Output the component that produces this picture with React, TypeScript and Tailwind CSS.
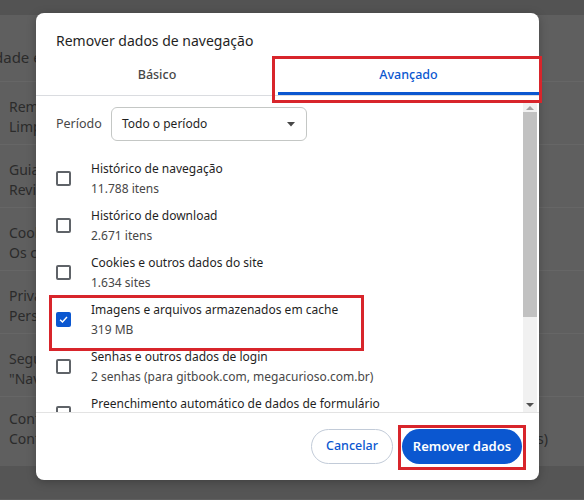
import React from "react";

const font = { fontFamily: '"Noto Sans", "Open Sans", Arial, sans-serif' };

const fundo = [
  {
    titulo: "Remover dados de navegação",
    sub: "Limpar histórico, cookies, cache e mais",
  },
  {
    titulo: "Guia de privacidade",
    sub: "Revise os principais controles de privacidade e segurança",
  },
  {
    titulo: "Cookies de terceiros",
    sub: "Os cookies de terceiros estão bloqueados no modo de navegação anônima",
  },
  {
    titulo: "Privacidade de anúncios",
    sub: "Personalize as informações usadas pelos sites para mostrar anúncios",
  },
  {
    titulo: "Segurança",
    sub: '"Navegação segura" (proteção contra sites perigosos) e outras configurações',
  },
];

const itens = [
  { nome: "Histórico de navegação", info: "11.788 itens", marcado: false },
  { nome: "Histórico de download", info: "2.671 itens", marcado: false },
  { nome: "Cookies e outros dados do site", info: "1.634 sites", marcado: false },
  {
    nome: "Imagens e arquivos armazenados em cache",
    info: "319 MB",
    marcado: true,
  },
  {
    nome: "Senhas e outros dados de login",
    info: "2 senhas (para gitbook.com, megacurioso.com.br)",
    marcado: false,
  },
  {
    nome: "Preenchimento automático de dados de formulário",
    info: "",
    marcado: false,
  },
];

function Caixa({ marcado }: { marcado: boolean }) {
  if (marcado) {
    return (
      <div className="w-[15px] h-[15px] rounded-[2px] bg-[#0b57d0] flex items-center justify-center shrink-0">
        <svg width="11" height="11" viewBox="0 0 12 12">
          <path
            d="M2.3 6.2 L4.9 8.7 L9.8 3.4"
            fill="none"
            stroke="white"
            strokeWidth="1.6"
          />
        </svg>
      </div>
    );
  }
  return (
    <div className="w-[15px] h-[15px] rounded-[2px] border-2 border-[#5f6368] shrink-0"></div>
  );
}

export default function App() {
  return (
    <div
      className="relative w-[584px] h-[500px] overflow-hidden bg-[#5f5f5f]"
      style={font}
    >
      {/* pagina de configuracoes escurecida */}
      <div className="h-[15px] bg-[#535353]"></div>
      <div className="h-[67px] flex items-end pb-[14px] border-b border-[#666666]">
        <div className="ml-[-6px] text-[15px] leading-[20px] text-[#2b2b2b] whitespace-nowrap">
          dade e segurança
        </div>
      </div>
      {fundo.map((r) => (
        <div
          key={r.titulo}
          className="h-[63px] pt-[15px] pl-[9px] border-b border-[#666666] text-[14px] leading-[20px] text-[#2b2b2b] whitespace-nowrap"
        >
          <div>{r.titulo}</div>
          <div>{r.sub}</div>
        </div>
      ))}
      <div className="h-[69px] pt-[12px] pl-[9px] text-[14px] leading-[20px] text-[#2b2b2b] whitespace-nowrap">
        <div>Configurações do site</div>
        <div className="w-[539px] flex justify-between">
          <span className="min-w-0 overflow-hidden">
            Controla quais informações os sites podem usar e mostrar
          </span>
          <span className="shrink-0">(local, câmera, pop-ups e outros)</span>
        </div>
      </div>
      <div className="h-[33px] bg-[#555555]"></div>

      {/* dialogo */}
      <div className="absolute left-[36px] top-[13px] w-[503px] h-[467px] bg-white rounded-[8px] shadow-[0_2px_10px_rgba(0,0,0,0.25)] flex flex-col overflow-hidden">
        <div className="pt-[18px] pl-[20px] h-[43px] text-[14px] leading-[20px] text-[#1f1f1f]">
          Remover dados de navegação
        </div>
        <div className="flex h-[40px] border-b border-[#dadce0] text-[12.5px] font-medium">
          <div className="w-[242px] flex items-center justify-center text-[#474747]">
            Básico
          </div>
          <div className="flex-1 flex items-center justify-center text-[#0b57d0] border-b-[3px] border-[#0b57d0] pt-[3px]">
            Avançado
          </div>
        </div>

        <div className="flex h-[316px]">
          <div className="flex-1 overflow-hidden pl-[20px]">
            <div className="flex items-center mt-[11px] h-[34px]">
              <div className="w-[55px] text-[12.5px] text-[#474747]">Período</div>
              <div className="w-[196px] h-[34px] border border-[#c4c7c5] rounded-[6px] flex items-center justify-between pl-[10px] pr-[11px] text-[12px] text-[#1f1f1f]">
                <span>Todo o período</span>
                <svg width="8" height="5" viewBox="0 0 8 5">
                  <path d="M0 0 H8 L4 4.5 Z" fill="#474747" />
                </svg>
              </div>
            </div>
            <div className="mt-[14px]">
              {itens.map((it) => (
                <div
                  key={it.nome}
                  className="h-[47px] flex items-center gap-[20px] shrink-0"
                >
                  <Caixa marcado={it.marcado} />
                  <div className="text-[12px] leading-[20px] whitespace-nowrap">
                    <div className="text-[#1f1f1f]">{it.nome}</div>
                    <div className="text-[#474747] h-[20px]">{it.info}</div>
                  </div>
                </div>
              ))}
            </div>
          </div>
          <div className="w-[14px] mr-[2px] mt-[7px] bg-[#f1f1f1] flex flex-col items-center">
            <svg width="8" height="6" viewBox="0 0 8 6" className="mt-[2px]">
              <path d="M0 5 H8 L4 1 Z" fill="#a3a3a3" />
            </svg>
            <div className="w-[14px] h-[205px] bg-[#c1c1c1] mt-[1px]"></div>
            <div className="flex-1"></div>
            <svg width="8" height="6" viewBox="0 0 8 6" className="mb-[4px]">
              <path d="M0 1 H8 L4 5 Z" fill="#505050" />
            </svg>
          </div>
        </div>

        <div className="flex-1 border-t border-[#e3e3e3] flex items-start justify-end gap-[9px] pr-[17px] pt-[16px]">
          <button className="h-[35px] w-[82px] rounded-full border border-[#c2cbd8] text-[#0b57d0] text-[12.5px] font-medium">
            Cancelar
          </button>
          <button className="h-[35px] w-[120px] rounded-full bg-[#0b57d0] text-white text-[13px] font-semibold">
            Remover dados
          </button>
        </div>
      </div>

      {/* marcacoes em vermelho */}
      <div className="absolute left-[272px] top-[56px] w-[270px] h-[47px] border-[3px] border-[#d8252b]"></div>
      <div className="absolute left-[49px] top-[295px] w-[315px] h-[56px] border-[3px] border-[#d8252b]"></div>
      <div className="absolute left-[398px] top-[425px] w-[128px] h-[45px] border-[3px] border-[#d8252b]"></div>
    </div>
  );
}
